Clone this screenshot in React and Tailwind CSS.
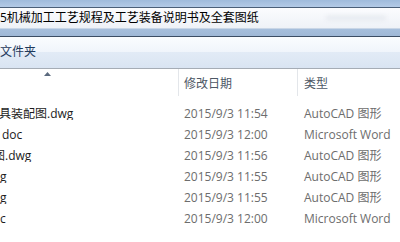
import React from "react";

const rows = [
  { name: "具装配图.dwg", ml: "ml-[-1px]", date: "2015/9/3 11:54", type: "AutoCAD 图形" },
  { name: "doc", ml: "ml-[2px]", date: "2015/9/3 12:00", type: "Microsoft Word" },
  { name: "图.dwg", ml: "ml-[-7px]", date: "2015/9/3 11:56", type: "AutoCAD 图形" },
  { name: "g", ml: "ml-0", date: "2015/9/3 11:55", type: "AutoCAD 图形" },
  { name: "g", ml: "ml-0", date: "2015/9/3 11:55", type: "AutoCAD 图形" },
  { name: "c", ml: "ml-0", date: "2015/9/3 12:00", type: "Microsoft Word" },
];

export default function App() {
  return (
    <div
      className="w-[400px] h-[242px] overflow-hidden bg-white flex flex-col text-[12px] leading-none"
      style={{ fontFamily: '"Open Sans", "Noto Sans CJK SC", sans-serif' }}
    >
      <div className="h-[7px] shrink-0 bg-gradient-to-b from-[#9fbbdc] to-[#b3cae6]" />
      <div className="h-[1px] shrink-0 bg-[#4a5f78]" />
      <div className="h-[20px] shrink-0 bg-gradient-to-b from-[#fbfcfe] to-[#eef2f7] flex items-center justify-between">
        <span className="text-black whitespace-nowrap">5机械加工工艺规程及工艺装备说明书及全套图纸</span>
        <span className="mr-[14px] w-[60px] h-[4px] rounded-full bg-[#e4e8ee] blur-[2px]" />
      </div>
      <div className="h-[1px] shrink-0 bg-[#c9d6e6]" />
      <div className="h-[7px] shrink-0 bg-gradient-to-b from-[#a6bfdc] to-[#9fb8d6]" />
      <div className="h-[1px] shrink-0 bg-[#3b4d63]" />
      <div className="h-[31px] shrink-0 flex flex-col">
        <div className="h-[15px] bg-gradient-to-b from-[#fafcfe] to-[#f0f5fb]" />
        <div className="flex-1 bg-gradient-to-b from-[#e2ebf6] to-[#d9e4f2]" />
        <div className="absolute mt-[9px] text-[#1e395b] whitespace-nowrap">文件夹</div>
      </div>
      <div className="h-[1px] shrink-0 bg-[#a5acb5]" />
      <div className="h-[27px] shrink-0 flex relative bg-white">
        <svg className="absolute left-[44px] top-[3px]" width="7" height="4" viewBox="0 0 7 4">
          <path d="M0 4 L3.5 0 L7 4 Z" fill="#5b6a7e" />
        </svg>
        <div className="w-[178px] shrink-0" />
        <div className="w-[1px] shrink-0 bg-[#e3e6ea]" />
        <div className="w-[118px] shrink-0 pl-[5px] pt-[9px] text-[#4d5765]">修改日期</div>
        <div className="w-[1px] shrink-0 bg-[#e3e6ea]" />
        <div className="flex-1 pl-[6px] pt-[9px] text-[#4d5765]">类型</div>
      </div>
      <div className="pt-[7px] flex flex-col">
        {rows.map((r, i) => (
          <div key={i} className="h-[21px] flex items-center whitespace-nowrap">
            <div className="w-[184px] shrink-0 overflow-hidden text-[#1c1c1c]">
              <span className={"inline-block " + r.ml}>{r.name}</span>
            </div>
            <div className="w-[120px] shrink-0 text-[#6d6d6d]">{r.date}</div>
            <div className="flex-1 text-[#6d6d6d]">{r.type}</div>
          </div>
        ))}
      </div>
    </div>
  );
}
